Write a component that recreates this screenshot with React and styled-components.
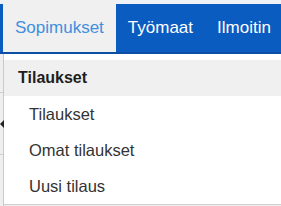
import React from 'react'
import styled, { createGlobalStyle } from "styled-components";

const GlobalStyle = createGlobalStyle`
    body {
        margin: 0;
        background: #efefef;
        font-family: "Liberation Sans", Arial, sans-serif;
    }
`

const Page = styled.div`
    position: relative;
    width: 281px;
    height: 206px;
    overflow: hidden;
`

const NavBar = styled.nav`
    display: flex;
    align-items: stretch;
    height: 52px;
    padding-left: 3px;
    background-color: #0b5cc0;
    box-shadow: inset 0 4px 0 #eef2f7;
    border-bottom: 2px solid #0a4ea6;
`

const NavItem = styled.a`
    display: flex;
    align-items: center;
    padding: 4px 12px 0 12px;
    font-size: 17px;
    white-space: nowrap;
    text-decoration: none;
    cursor: pointer;
    color: ${props => props.active ? "#3f8fe0" : "#fff"};
    background-color: ${props => props.active ? "#f0f0f0" : "transparent"};
`

const Backdrop = styled.div`
    display: flex;
    flex-direction: column;
    width: 3px;
    height: 152px;
    border-right: 1px solid #c9c9c9;
`

const BackRow = styled.div`
    position: relative;
    height: ${props => props.h}px;
    border-bottom: 1px solid #cfcfcf;
`

const Arrow = styled.span`
    position: absolute;
    left: 0;
    top: 27px;
    width: 0;
    height: 0;
    border-top: 4px solid transparent;
    border-bottom: 4px solid transparent;
    border-right: 4px solid #222;
`

const Dropdown = styled.div`
    position: absolute;
    top: 54px;
    left: 4px;
    right: 0;
    padding-top: 6px;
    background: #fff;
    border-bottom: 1px solid #d0d0d0;
`

const MenuHeader = styled.div`
    display: flex;
    align-items: center;
    height: 36px;
    padding-left: 14px;
    background: #f0f0f0;
    color: #1e1e1e;
    font-size: 16px;
    font-weight: bold;
`

const MenuItem = styled.a`
    display: flex;
    align-items: center;
    height: 36px;
    padding-left: 25px;
    font-size: 16.5px;
    color: #333;
    cursor: pointer;
`

export default function App() {
    return (
        <Page>
            <GlobalStyle />
            <NavBar>
                <NavItem active>Sopimukset</NavItem>
                <NavItem>Työmaat</NavItem>
                <NavItem>Ilmoitin</NavItem>
            </NavBar>

            <Backdrop>
                <BackRow h={38} />
                <BackRow h={61}>
                    <Arrow />
                </BackRow>
            </Backdrop>

            <Dropdown>
                <MenuHeader>Tilaukset</MenuHeader>
                <MenuItem>Tilaukset</MenuItem>
                <MenuItem>Omat tilaukset</MenuItem>
                <MenuItem>Uusi tilaus</MenuItem>
            </Dropdown>
        </Page>
    )
}
